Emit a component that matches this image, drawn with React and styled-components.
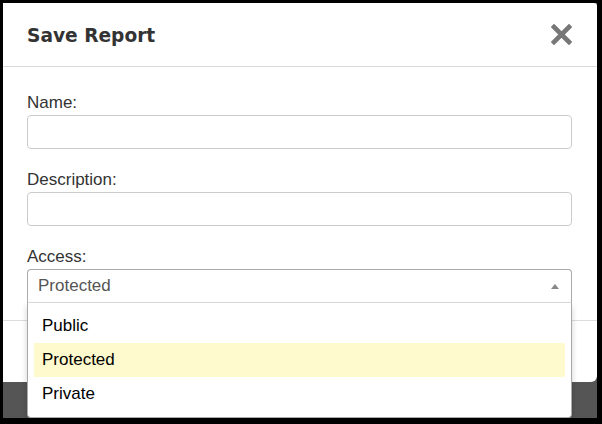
import styled, { createGlobalStyle } from 'styled-components';

const GlobalStyle = createGlobalStyle`
  html, body {
    margin: 0;
    padding: 0;
    background: #000;
  }
  * {
    box-sizing: border-box;
  }
`;

const Frame = styled.div`
  width: 602px;
  height: 424px;
  padding: 3px 5px 6px 3px;
  background: #000;
`;

const Backdrop = styled.div`
  height: 100%;
  background: #555;
`;

const Modal = styled.div`
  height: 379px;
  background: #fff;
  border-radius: 0 3px 6px 0;
  display: flex;
  flex-direction: column;
  font-family: 'Liberation Sans', Arial, sans-serif;
`;

const Header = styled.div`
  height: 64px;
  flex-shrink: 0;
  display: flex;
  align-items: center;
  justify-content: space-between;
  padding: 0 25px 0 24px;
  border-bottom: 1px solid #dcdcdc;
`;

const Title = styled.h4`
  margin: 3px 0 0;
  font-family: 'DejaVu Sans', Verdana, sans-serif;
  font-weight: 700;
  font-size: 18.6px;
  line-height: 22px;
  color: #333;
`;

const CloseButton = styled.button`
  border: 0;
  padding: 0;
  background: none;
  width: 21px;
  height: 21px;
  display: flex;
`;

const Body = styled.div`
  padding: 26px 25px 17px 24px;
  display: flex;
  flex-direction: column;
  gap: 21px;
`;

const Field = styled.div`
  display: flex;
  flex-direction: column;
  gap: 2px;
`;

const Label = styled.label`
  font-size: 17px;
  line-height: 20px;
  color: #333;
`;

const Input = styled.input`
  height: 34px;
  width: 100%;
  border: 1px solid #ccc;
  border-radius: 4px;
  background: #fff;
  font-family: inherit;
  font-size: 17px;
  padding: 0 10px;
`;

const SelectWrap = styled.div`
  position: relative;
`;

const SelectBox = styled.div`
  height: 34px;
  border: 1px solid #aaa;
  border-bottom-color: #ddd;
  border-radius: 4px 4px 0 0;
  display: flex;
  align-items: center;
  justify-content: space-between;
  padding: 0 12px 0 10px;
  font-size: 17px;
  color: #555;
`;

const Caret = styled.span`
  width: 0;
  height: 0;
  border-left: 4px solid transparent;
  border-right: 4px solid transparent;
  border-bottom: 5px solid #888;
`;

const Options = styled.ul`
  position: absolute;
  top: 34px;
  left: 0;
  right: 0;
  margin: 0;
  padding: 6px;
  list-style: none;
  background: #fff;
  border: 1px solid #aaa;
  border-top: 0;
  border-radius: 0 0 4px 4px;
  box-shadow: 0 3px 6px rgba(0, 0, 0, 0.18);
  z-index: 2;
`;

const Option = styled.li`
  height: 34px;
  display: flex;
  align-items: center;
  padding-left: 8px;
  font-size: 17px;
  color: #000;
  background: ${(p) => (p.$active ? '#fffacd' : 'transparent')};
`;

const Footer = styled.div`
  flex: 1;
  border-top: 1px solid #ddd;
`;

const CloseIcon = () => (
  <svg width="21" height="21" viewBox="0 0 21 21">
    <path d="M3 3 L18 18 M18 3 L3 18" stroke="#777" strokeWidth="4.6" strokeLinecap="square" />
  </svg>
);

const options = ['Public', 'Protected', 'Private'];

const App = () => {
  return (
    <>
      <GlobalStyle />
      <Frame>
        <Backdrop>
          <Modal>
            <Header>
              <Title>Save Report</Title>
              <CloseButton aria-label="Close">
                <CloseIcon />
              </CloseButton>
            </Header>
            <Body>
              <Field>
                <Label>Name:</Label>
                <Input />
              </Field>
              <Field>
                <Label>Description:</Label>
                <Input />
              </Field>
              <Field>
                <Label>Access:</Label>
                <SelectWrap>
                  <SelectBox>
                    <span>Protected</span>
                    <Caret />
                  </SelectBox>
                  <Options>
                    {options.map((o) => (
                      <Option key={o} $active={o === 'Protected'}>
                        {o}
                      </Option>
                    ))}
                  </Options>
                </SelectWrap>
              </Field>
            </Body>
            <Footer />
          </Modal>
        </Backdrop>
      </Frame>
    </>
  );
};

export default App;
